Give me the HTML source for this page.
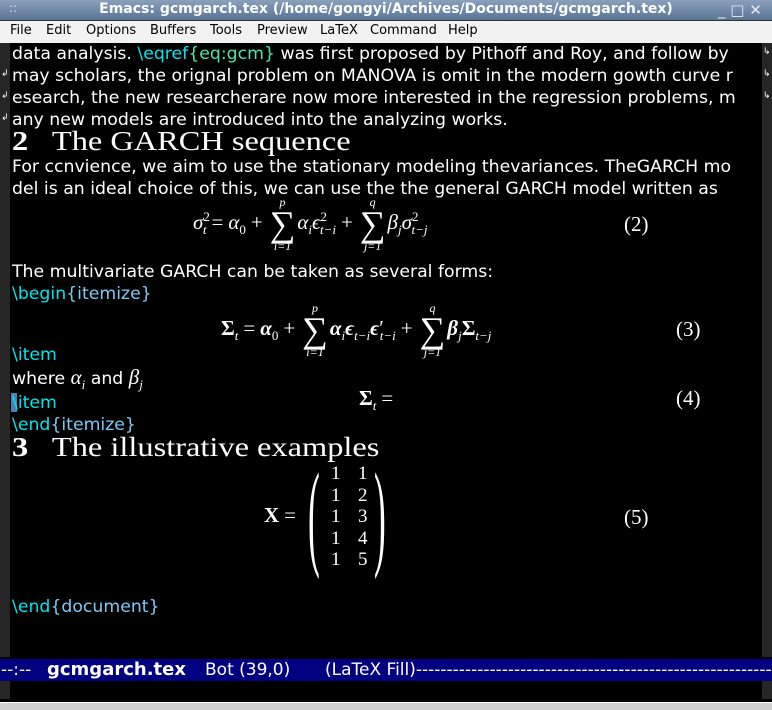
<!DOCTYPE html>
<html><head><meta charset="utf-8"><style>
body{margin:0;width:772px;height:709px;background:#000;position:relative;overflow:hidden;font-family:"DejaVu Sans",sans-serif}
.a{position:absolute;white-space:pre}
.t{font-size:17.3px;color:#fff;left:12px;line-height:22px}
.c{color:#00e5ee}.b{color:#7ec8f5}
.m{font-family:"Liberation Serif",serif;color:#fff;font-size:21px;white-space:nowrap}
.m sub,.m sup{font-size:13px;line-height:0}
.o{margin:0 5px}
.h{font-family:"Liberation Serif",serif;color:#fff;font-size:27px;transform:scaleX(1.2);transform-origin:left}
.sum{display:inline-flex;flex-direction:column;align-items:center;vertical-align:middle;line-height:1;margin:0 2px}
.sum .l{font-size:12px;font-style:italic}
.sum .g{font-size:36px;line-height:32px}
.mn{position:absolute;top:23px;font-size:13px;color:#000}
.ml{position:absolute;top:0;color:#fff;font-size:17px;line-height:22px;white-space:pre}
</style></head><body>
<div class="a" style="left:0;top:0;width:772px;height:20px;background:linear-gradient(#8aa0bb,#5a7494);"></div>
<div class="a" style="left:9px;top:1px;color:#dde;font-size:12px">::</div>
<div class="a" style="left:0;top:1px;width:772px;text-align:center;color:#fff;font-weight:bold;font-size:14px">Emacs: gcmgarch.tex (/home/gongyi/Archives/Documents/gcmgarch.tex)</div>
<div class="a" style="left:718px;top:1px;color:#e6ecf4;font-size:15px">_ □ ✕</div>
<div class="a" style="left:0;top:20px;width:772px;height:22px;background:#f2f2f2;border-top:1px solid #333"></div>
<span class="mn" style="left:10px">File</span><span class="mn" style="left:46px">Edit</span><span class="mn" style="left:86px">Options</span><span class="mn" style="left:150px">Buffers</span><span class="mn" style="left:210px">Tools</span><span class="mn" style="left:257px">Preview</span><span class="mn" style="left:320px">LaTeX</span><span class="mn" style="left:370px">Command</span><span class="mn" style="left:448px">Help</span>
<div class="a" style="left:0;top:43px;width:10px;height:614px;background:#262626"></div>
<div class="a" style="left:762px;top:43px;width:10px;height:614px;background:#262626"></div>
<div class="a" style="left:0;top:681px;width:10px;height:18px;background:#262626"></div>
<div class="a" style="left:762px;top:681px;width:10px;height:18px;background:#262626"></div>
<div class="a" style="left:0;top:702px;width:772px;height:7px;background:#d0d0d0;border-top:1px solid #fff"></div>
<div class="a" style="left:1px;top:69px;color:#fff;font-size:9px">↲</div>
<div class="a" style="left:1px;top:91px;color:#fff;font-size:9px">↲</div>
<div class="a" style="left:1px;top:113px;color:#fff;font-size:9px">↲</div>
<div class="a" style="left:763px;top:47px;color:#fff;font-size:9px">↳</div>
<div class="a" style="left:763px;top:69px;color:#fff;font-size:9px">↳</div>
<div class="a" style="left:763px;top:91px;color:#fff;font-size:9px">↳</div>

<div class="a t" style="top:43px">data analysis. <span class="c">\eqref</span><span style="color:#4fe3b0">{eq:gcm}</span> was first proposed by Pithoff and Roy, and follow by</div>
<div class="a t" style="top:65px">may scholars, the orignal problem on MANOVA is omit in the modern gowth curve r</div>
<div class="a t" style="top:87px">esearch, the new researcherare now more interested in the regression problems, m</div>
<div class="a t" style="top:109px">any new models are introduced into the analyzing works.</div>
<div class="a h" style="left:12px;top:126px"><b>2</b>   The GARCH sequence</div>
<div class="a t" style="top:156px">For ccnvience, we aim to use the stationary modeling thevariances. TheGARCH mo</div>
<div class="a t" style="top:178px">del is an ideal choice of this, we can use the the general GARCH model written as</div>

<div class="a m" style="left:193px;top:196px"><i>σ</i><sup>2</sup><sub style="margin-left:-7px"><i>t</i></sub><span class="o">=</span><i>α</i><sub>0</sub><span class="o">+</span><span class="sum"><span class="l">p</span><span class="g">∑</span><span class="l">i=1</span></span><i>α</i><sub><i>i</i></sub><i>ϵ</i><sup>2</sup><sub style="margin-left:-7px"><i>t−i</i></sub><span class="o">+</span><span class="sum"><span class="l">q</span><span class="g">∑</span><span class="l">j=1</span></span><i>β</i><sub><i>j</i></sub><i>σ</i><sup>2</sup><sub style="margin-left:-7px"><i>t−j</i></sub></div>
<div class="a m" style="left:624px;top:212px">(2)</div>

<div class="a t" style="top:261px">The multivariate GARCH can be taken as several forms:</div>
<div class="a t" style="top:283px"><span class="c">\begin</span><span class="b">{itemize}</span></div>
<div class="a m" style="left:221px;top:302px"><b>Σ</b><sub><i>t</i></sub><span class="o">=</span><b><i>α</i></b><sub>0</sub><span class="o">+</span><span class="sum"><span class="l">p</span><span class="g">∑</span><span class="l">i=1</span></span><b><i>α</i></b><sub><i>i</i></sub><b><i>ϵ</i></b><sub><i>t−i</i></sub><b><i>ϵ</i></b>′<sub style="margin-left:-4px"><i>t−i</i></sub><span class="o">+</span><span class="sum"><span class="l">q</span><span class="g">∑</span><span class="l">j=1</span></span><b><i>β</i></b><sub><i>j</i></sub><b>Σ</b><sub><i>t−j</i></sub></div>
<div class="a m" style="left:676px;top:317px">(3)</div>
<div class="a t c" style="top:344px">\item</div>
<div class="a t" style="top:366px">where <span class="m"><i>α</i><sub><i>i</i></sub></span> and <span class="m"><i>β</i><sub><i>j</i></sub></span></div>
<div class="a" style="left:11px;top:393px;width:6px;height:19px;background:#4682b4"></div>
<div class="a t c" style="top:392px">\item</div>
<div class="a m" style="left:359px;top:386px"><b>Σ</b><sub><i>t</i></sub><span class="o">=</span></div>
<div class="a m" style="left:676px;top:386px">(4)</div>
<div class="a t" style="top:414px"><span class="c">\end</span><span class="b">{itemize}</span></div>
<div class="a h" style="left:12px;top:432px"><b>3</b>   The illustrative examples</div>

<div class="a m" style="left:264px;top:503px"><b>X</b><span class="o">=</span></div>
<div class="a m" style="left:308px;top:456px;font-size:118px;line-height:118px;transform:scaleX(0.3);transform-origin:left">(</div>
<div class="a m" style="left:374px;top:456px;font-size:118px;line-height:118px;transform:scaleX(0.3);transform-origin:left">)</div>
<div class="a m" style="left:331px;top:463px;line-height:21.5px;white-space:pre;font-size:19px">1
1
1
1
1</div>
<div class="a m" style="left:358px;top:463px;line-height:21.5px;white-space:pre;font-size:19px">1
2
3
4
5</div>
<div class="a m" style="left:624px;top:505px">(5)</div>
<div class="a t" style="top:596px"><span class="c">\end</span><span class="b">{document}</span></div>

<div class="a" style="left:0;top:659px;width:772px;height:22px;background:#000080;overflow:hidden">
<span class="ml" style="left:1px">--:--</span>
<span class="ml" style="left:47px;font-weight:bold;font-size:18px">gcmgarch.tex</span>
<span class="ml" style="left:205px">Bot (39,0)</span>
<span class="ml" style="left:325px">(LaTeX Fill)--------------------------------------------------------------------------</span>
</div>
</body></html>
